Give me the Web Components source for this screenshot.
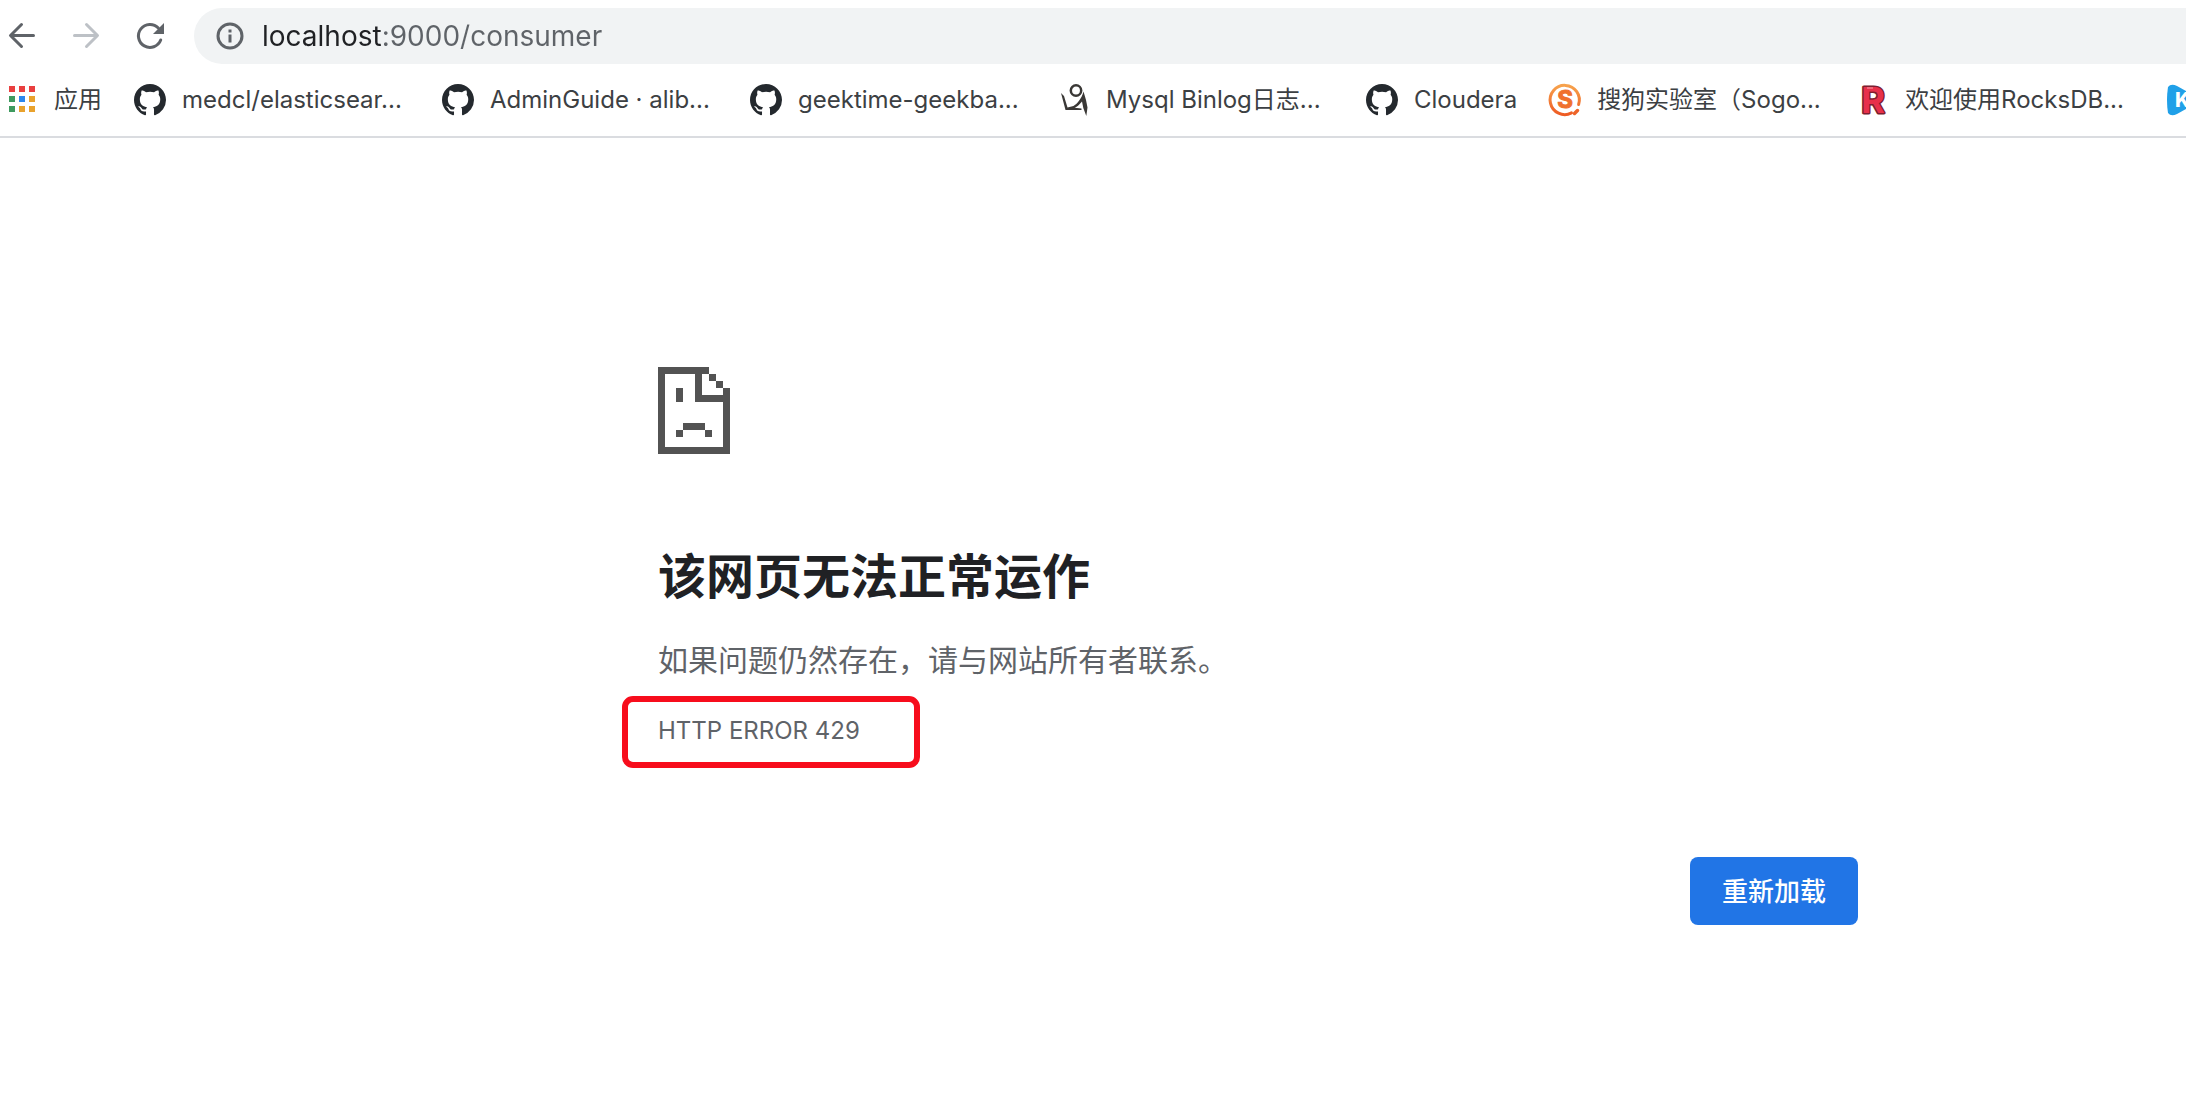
<!DOCTYPE html>
<html lang="zh-CN">
<head>
<meta charset="utf-8">
<title>localhost</title>
<style>
  html, body { margin: 0; min-height: 100%; background: #fff; }
  body { font-family: Inter, "Noto Sans CJK SC", sans-serif; color: #3c4043; }
</style>
</head>
<body>
<browser-page></browser-page>
<script>
const define = (name, html, setup) => customElements.define(name, class extends HTMLElement {
  constructor() {
    super();
    this.attachShadow({ mode: 'open' }).innerHTML = html;
  }
  connectedCallback() { if (setup) setup(this, this.shadowRoot); }
});

const ICONS = {
  back: `<g fill="none" stroke="#5f6368" stroke-width="3" stroke-linecap="round" stroke-linejoin="round"><path d="M27.5 15.5H5M15.5 4.5l-11 11 11 11"/></g>`,
  forward: `<g fill="none" stroke="#bdc1c6" stroke-width="3" stroke-linecap="round" stroke-linejoin="round"><path d="M4.5 15.5H27M16.5 4.5l11 11-11 11"/></g>`,
  reload: `<path d="M26.7 20A11.5 11.5 0 1 1 24.3 8" fill="none" stroke="#5f6368" stroke-width="3" stroke-linecap="round"/><path d="M30 3v11H19z" fill="#5f6368"/>`,
  info: `<circle cx="16" cy="16" r="12" fill="none" stroke="#5f6368" stroke-width="3"/><path d="M14.5 9.500h3v3h-3zM14.5 14.5h3v8h-3z" fill="#5f6368"/>`,
  apps: `<g fill="#e93f3f"><path d="M3 2h6v6H3zM13 2h6v6h-6zM23 2h6v6h-6z"/></g><path d="M3 12h6v6H3zM3 22h6v6H3z" fill="#3e9a5f"/><path d="M13 12h6v6h-6z" fill="#2b87ee"/><path d="M23 12h6v6h-6zM13 22h6v6h-6zM23 22h6v6h-6z" fill="#e9a22d"/>`,
  github: `<g transform="scale(2)"><path fill="#24292e" fill-rule="evenodd" d="M8 0C3.58 0 0 3.58 0 8c0 3.54 2.29 6.53 5.47 7.59.4.07.55-.17.55-.38 0-.19-.01-.82-.01-1.49-2.01.37-2.53-.49-2.69-.94-.09-.23-.48-.94-.82-1.13-.28-.15-.68-.52-.01-.53.63-.01 1.08.58 1.23.82.72 1.21 1.87.87 2.33.66.07-.52.28-.87.51-1.07-1.78-.2-3.64-.89-3.64-3.95 0-.87.31-1.59.82-2.15-.08-.2-.36-1.02.08-2.12 0 0 .67-.21 2.2.82.64-.18 1.32-.27 2-.27s1.36.09 2 .27c1.53-1.04 2.2-.82 2.2-.82.44 1.1.16 1.92.08 2.12.51.56.82 1.27.82 2.15 0 3.07-1.87 3.75-3.65 3.95.29.25.54.73.54 1.48 0 1.07-.01 1.93-.01 2.2 0 .21.15.46.55.38A8.01 8.01 0 0 0 16 8c0-4.42-3.58-8-8-8z"/></g>`,
  figure: `<circle cx="18" cy="6.500" r="5.200" fill="none" stroke="#3a3836" stroke-width="2.5"/><path d="M3 9l3 3 3.500 11.500 6-1.500C19 20 23.500 15 25.500 7.500L28 16l1.500 7.500-1.200 8.500-3-8-1.300-6.500C20 22 19 23 16.500 23.700l7 .8v1.500H7.500z" fill="#3a3836"/>`,
  sogou: `<defs><linearGradient id="g" x2="0" y2="1"><stop stop-color="#f7a24c"/><stop offset="1" stop-color="#ee5c24"/></linearGradient></defs><path d="M22.500 28.900A14.600 14.600 0 1 1 29.600 20.500" fill="none" stroke="url(#g)" stroke-width="3" stroke-linecap="round"/><path d="M25.500 29.500l3-3" stroke="#ee6428" stroke-width="3.500" stroke-linecap="round"/><text x="16" y="24" text-anchor="middle" font-family="Inter" font-size="24" font-weight="700" fill="#f0702e" stroke="#f0702e" stroke-width="1">S</text>`,
  rocks: `<text x="16" y="29" text-anchor="middle" font-family="Inter" font-size="36" font-weight="700" fill="#e8304a" stroke="#7c2030" stroke-width="3" stroke-linejoin="round" paint-order="stroke">R</text><path d="M10 4h6" stroke="#f7a0a8" stroke-width="1"/>`,
  kplay: `<path d="M3 3Q6-1 12 2l18 10q4 4 0 8L12 30q-6 3-9-1Q1 16 3 3z" fill="#20a0e8"/><text x="10" y="23" font-family="Inter" font-size="20" font-weight="800" fill="#fff">K</text>`
};

define('ui-icon', `<style>
  :host { display: block; flex: none; width: 32px; height: 32px; }
  svg { display: block; width: 32px; height: 32px; overflow: visible; }
</style><svg viewBox="0 0 32 32" aria-hidden="true"></svg>`,
(el, root) => { root.querySelector('svg').innerHTML = ICONS[el.getAttribute('name')]; });

define('tool-button', `<style>
  :host { display: block; flex: none; }
  button { display: block; padding: 0; border: 0; background: none; }
</style><button type="button"><slot></slot></button>`,
(el, root) => {
  const b = root.querySelector('button');
  b.setAttribute('aria-label', el.getAttribute('label'));
  b.disabled = el.hasAttribute('disabled');
});

define('address-bar', `<style>
  :host { display: flex; flex: 1; align-items: center; gap: 16px; box-sizing: border-box; height: 56px; padding-left: 20px; border-radius: 28px 0 0 28px; background: #f1f3f4; }
  input { flex: 1; min-width: 0; height: 40px; padding: 0; border: 0; outline: 0; font: 28px/40px Inter, sans-serif; color: transparent;
    background: linear-gradient(90deg, #202124 122px, #5f6368 122px); -webkit-background-clip: text; background-clip: text; }
</style><ui-icon name="info"></ui-icon><input type="text" aria-label="地址" value="localhost:9000/consumer" spellcheck="false">`);

define('nav-toolbar', `<style>
  :host { display: flex; align-items: center; gap: 32px; padding: 8px 0 0 6px; }
  address-bar { margin-left: -4px; }
</style>
<tool-button label="后退"><ui-icon name="back"></ui-icon></tool-button>
<tool-button label="前进" disabled><ui-icon name="forward"></ui-icon></tool-button>
<tool-button label="重新加载此页"><ui-icon name="reload"></ui-icon></tool-button>
<address-bar></address-bar>`);

define('bookmark-link', `<style>
  :host { display: block; flex: none; }
  a { display: flex; align-items: center; gap: 16px; color: #3c4043; text-decoration: none; font-size: 24px; line-height: 32px; white-space: nowrap; }
  :host([long]) span { width: 228px; }
</style><a href="#"><ui-icon></ui-icon><span><slot></slot></span></a>`,
(el, root) => {
  const icon = document.createElement('ui-icon');
  icon.setAttribute('name', el.getAttribute('icon'));
  root.querySelector('ui-icon').replaceWith(icon);
});

define('bookmark-bar', `<style>
  :host { display: flex; align-items: center; gap: 32px; height: 72px; padding-left: 6px; overflow: hidden; border-bottom: 2px solid #dadce0; }
</style>
<bookmark-link icon="apps">应用</bookmark-link>
<bookmark-link icon="github" long>medcl/elasticsear...</bookmark-link>
<bookmark-link icon="github" long>AdminGuide · alib...</bookmark-link>
<bookmark-link icon="github" long>geektime-geekba...</bookmark-link>
<bookmark-link icon="figure" long>Mysql Binlog日志...</bookmark-link>
<bookmark-link icon="github">Cloudera</bookmark-link>
<bookmark-link icon="sogou" long>搜狗实验室（Sogo...</bookmark-link>
<bookmark-link icon="rocks" long>欢迎使用RocksDB...</bookmark-link>
<bookmark-link icon="kplay"></bookmark-link>`);

define('sad-page', `<style>
  :host { display: block; }
  svg { display: block; width: 72px; height: 87px; }
</style><svg viewBox="0 0 72 87" fill="#535353" shape-rendering="crispEdges" aria-hidden="true">
<path d="M0 0h51v7h-7v21h21v-7h7v66H0zM7 7v73h58V35H37V7z" fill-rule="evenodd"/>
<path d="M51 7h7v7h-7zM58 14h7v7h-7zM18 21h7v14h-7zM25 56h22v7H25zM18 63h7v7h-7zM47 63h7v7h-7z"/></svg>`);

define('error-code', `<style>
  :host { display: block; box-sizing: border-box; width: 298px; margin-left: -36px; padding: 13px 30px 15px; border: 6px solid #f70d1c; border-radius: 11px; font-size: 24px; line-height: 32px; color: #5f6368; }
</style><slot></slot>`);

define('reload-button', `<style>
  :host { display: flex; justify-content: flex-end; }
  button { padding: 15px 32px 13px; border: 0; border-radius: 8px; background: #2175e6; color: #fff; font: 500 26px/40px Inter, "Noto Sans CJK SC", sans-serif; }
</style><button type="button"><slot></slot></button>`);

define('error-view', `<style>
  :host { display: block; padding: 229px 328px 0 658px; }
  h1 { margin: 87px 0 0; font-size: 48px; line-height: 72px; font-weight: 700; color: #202124; }
  p { margin: 27px 0 0; font-size: 30px; line-height: 40px; color: #5f6368; }
  error-code { margin-top: 16px; }
  reload-button { margin-top: 89px; }
</style>
<sad-page></sad-page>
<h1>该网页无法正常运作</h1>
<p>如果问题仍然存在，请与网站所有者联系。</p>
<error-code>HTTP ERROR 429</error-code>
<reload-button>重新加载</reload-button>`);

define('browser-page', `<style>
  :host { display: block; overflow: hidden; }
</style>
<nav-toolbar></nav-toolbar>
<bookmark-bar></bookmark-bar>
<error-view></error-view>`);
</script>
</body>
</html>
